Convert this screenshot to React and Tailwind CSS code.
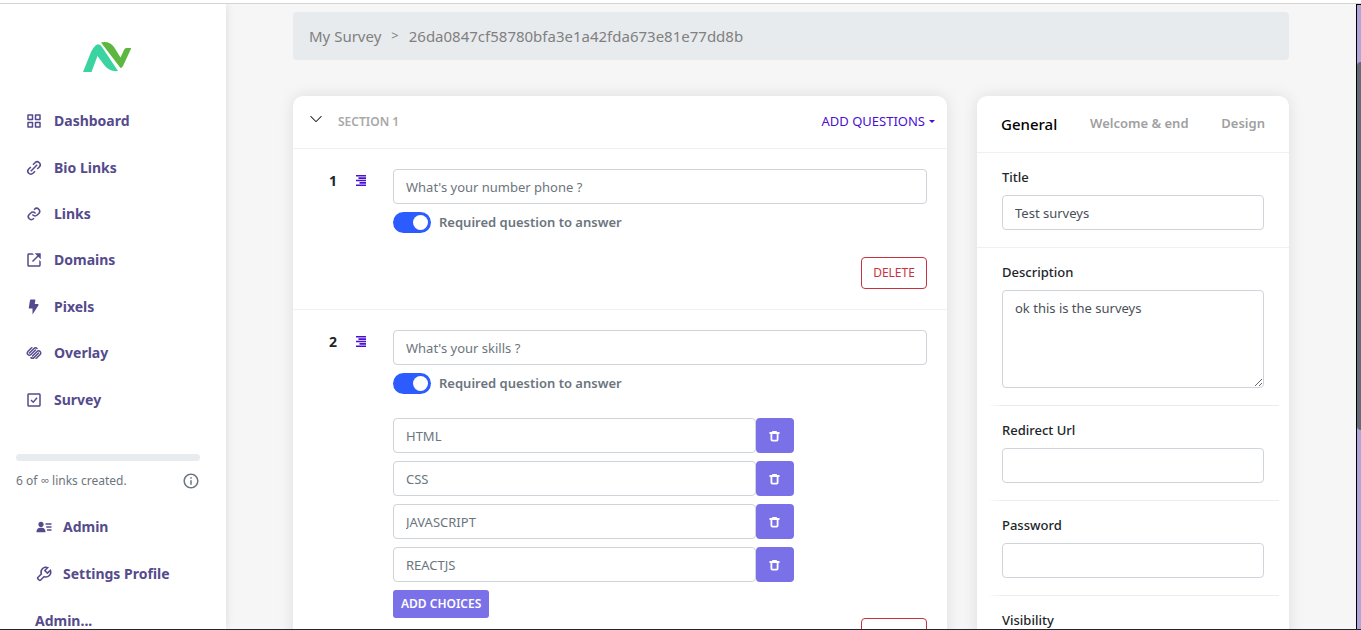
import {
  BiCheckSquare,
  BiGridAlt,
  BiInfoCircle,
  BiLink,
  BiLinkAlt,
  BiLinkExternal,
  BiLogoSquarespace,
  BiSolidBolt,
  BiSolidUserDetail,
  BiWrench,
} from "react-icons/bi";
import { BsChevronDown } from "react-icons/bs";

const mainLinks = [
  { label: "Dashboard", icon: BiGridAlt },
  { label: "Bio Links", icon: BiLinkAlt },
  { label: "Links", icon: BiLink },
  { label: "Domains", icon: BiLinkExternal },
  { label: "Pixels", icon: BiSolidBolt },
  { label: "Overlay", icon: BiLogoSquarespace },
  { label: "Survey", icon: BiCheckSquare },
];

const accountLinks = [
  { label: "Admin", icon: BiSolidUserDetail },
  { label: "Settings Profile", icon: BiWrench },
];

const choices = ["HTML", "CSS", "JAVASCRIPT", "REACTJS"];

const field =
  "block w-full rounded border border-[#ced4da] bg-white px-3 text-[13px] outline-none";

function Logo() {
  return (
    <svg viewBox="0 0 48 31" className="h-[31px] w-12" aria-hidden="true">
      <path
        d="M0 30 L8 10 Q11 4 14 2.5 Q17 1.5 19 5 L35 29 Q27 30 22 24 L14.5 14 L8.5 30 Z"
        fill="#3bd3a0"
      />
      <path
        d="M18 0.5 Q26 -1.5 31 5 L37.5 15.5 L41 8 Q41.6 6 43.5 6 H48.3 L40 24 Q39 26 37.5 26 Z"
        fill="#5cb63f"
      />
    </svg>
  );
}

function AlignIcon() {
  return (
    <svg viewBox="0 0 10 11" className="h-[11px] w-2.5 text-[#4a0fd0]" aria-hidden="true">
      <path
        d="M0 .7h10M2.5 3.1h7.5M0 5.5h10M3.5 7.9h6.5M0 10.3h10"
        stroke="currentColor"
        strokeWidth="1.6"
      />
    </svg>
  );
}

function TrashIcon() {
  return (
    <svg viewBox="0 0 11 12" className="h-3 w-[11px]" fill="none" stroke="currentColor" aria-hidden="true">
      <path d="M.5 3h10M3.2 1.8h4.6" strokeWidth="1.8" />
      <path d="M2.4 3v6.6q0 1 1 1h4.2q1 0 1-1V3" strokeWidth="1.8" />
    </svg>
  );
}

function Sidebar() {
  return (
    <aside className="flex w-[226px] shrink-0 flex-col bg-white shadow-[0_0_8px_rgba(0,0,0,0.12)]">
      <a href="#home" className="mt-[38px] ml-[83px] w-12" aria-label="Home">
        <Logo />
      </a>
      <nav className="mt-[25px] flex h-[325px] shrink-0 flex-col">
        {mainLinks.map(({ label, icon: Icon }) => (
          <a
            key={label}
            href={`#${label}`}
            className="flex flex-1 items-center gap-[11px] pl-[25px] text-sm font-bold text-[#554b8c]"
          >
            <Icon size={18} />
            {label}
          </a>
        ))}
      </nav>

      {/* Usage */}
      <div className="mt-[31px] px-4 pr-[26px]">
        <div className="h-[7px] rounded bg-[#e9ecef]" />
        <div className="mt-2 flex h-6 items-center justify-between text-xs text-[#6c757d]">
          <span>6 of ∞ links created.</span>
          <BiInfoCircle size={18} />
        </div>
      </div>

      <nav className="mt-2.5 flex flex-col text-sm font-bold text-[#554b8c]">
        {accountLinks.map(({ label, icon: Icon }) => (
          <a
            key={label}
            href={`#${label}`}
            className="flex h-[47px] items-center gap-2.5 pl-[35px]"
          >
            <Icon size={18} />
            {label}
          </a>
        ))}
        <a href="#account" className="flex h-[47px] items-center pl-[35px]">
          Admin...
        </a>
      </nav>
    </aside>
  );
}

function DeleteButton() {
  return (
    <button className="h-8 w-[66px] rounded border border-[#c73243] text-xs text-[#c73243]">
      DELETE
    </button>
  );
}

function Question({ number, title, children }) {
  return (
    <div className="flex pt-5 pr-5">
      <div className="flex h-[23px] w-[100px] shrink-0 items-center pl-9">
        <span className="w-[27px] text-sm font-bold text-[#212529]">
          {number}
        </span>
        <AlignIcon />
      </div>
      <div className="min-w-0 flex-1">
        <input
          aria-label={`Question ${number}`}
          defaultValue={title}
          className={`${field} h-[35px] text-[#6c757d]`}
        />
        <label className="mt-2 flex h-[21px] items-center gap-2 text-[13px] font-semibold text-[#6c757d]">
          <input
            type="checkbox"
            role="switch"
            defaultChecked
            className="flex h-[21px] w-[38px] appearance-none items-center justify-end rounded-full bg-[#2c5cff] px-[3px] before:size-[15px] before:rounded-full before:bg-white before:content-['']"
          />
          Required question to answer
        </label>
        {children}
      </div>
    </div>
  );
}

function SectionCard() {
  return (
    <section className="col-span-2 rounded-[10px] bg-white shadow-[0_0_16px_rgba(0,0,0,0.1)]">
      <header className="flex h-[53px] items-center border-b border-[#f0f0f0] pr-3 pl-4 text-xs">
        <BsChevronDown size={14} className="mr-[15px] mb-1.5 text-[#212529]" />
        <h2 className="font-semibold text-[#a8a8a8]">SECTION 1</h2>
        <button className="ml-auto flex items-center gap-1 text-[13px] text-[#4a0fd0]">
          ADD QUESTIONS
          <svg viewBox="0 0 6 3" className="h-[3px] w-1.5" aria-hidden="true">
            <path d="M0 0h6L3 3z" fill="currentColor" />
          </svg>
        </button>
      </header>

      <div className="border-b border-[#f0f0f0] pb-5">
        <Question number={1} title="What's your number phone ?">
          <div className="mt-6 flex justify-end">
            <DeleteButton />
          </div>
        </Question>
      </div>

      <Question number={2} title="What's your skills ?">
        <ul className="mt-6 flex flex-col gap-2">
          {choices.map((choice) => (
            <li key={choice} className="flex w-3/4">
              <input
                aria-label={`Choice ${choice}`}
                defaultValue={choice}
                className={`${field} h-[35px] min-w-0 flex-1 text-[#6c757d]`}
              />
              <button
                aria-label={`Remove ${choice}`}
                className="flex h-[35px] w-[38px] shrink-0 items-center justify-center rounded bg-[#7a70e8] text-white"
              >
                <TrashIcon />
              </button>
            </li>
          ))}
        </ul>
        <button className="mt-2 block h-7 rounded-[3px] bg-[#7a70e8] px-2 text-xs font-semibold text-white">
          ADD CHOICES
        </button>
        <div className="flex justify-end pb-5">
          <DeleteButton />
        </div>
      </Question>
    </section>
  );
}

function Setting({ label, id, children }) {
  return (
    <div className="px-[25px] pt-3.5 pb-[17px]">
      <label
        htmlFor={id}
        className="mb-[7px] block h-[21px] text-[13px] leading-[21px] font-medium text-[#212529]"
      >
        {label}
      </label>
      {children}
    </div>
  );
}

function FadedLine() {
  return (
    <div className="mx-2.5 h-px bg-linear-to-r from-transparent via-[#ececec] via-5% to-[#ececec]" />
  );
}

function SettingsCard() {
  return (
    <section className="rounded-[10px] bg-white shadow-[0_0_16px_rgba(0,0,0,0.1)]">
      <nav className="flex h-[57px] items-center justify-between border-b border-[#f0f0f0] px-6 text-[13px] font-semibold text-[#a0a0a0]">
        <button className="text-[15px] font-medium text-black">General</button>
        <button>Welcome &amp; end</button>
        <button>Design</button>
      </nav>
      <div className="border-b border-[#f0f0f0]">
        <Setting label="Title" id="title">
          <input
            id="title"
            defaultValue="Test surveys"
            className={`${field} h-[35px] text-[#495057]`}
          />
        </Setting>
      </div>
      <Setting label="Description" id="description">
        <textarea
          id="description"
          defaultValue="ok this is the surveys"
          className={`${field} h-[98px] resize-y py-[7px] leading-[21px] text-[#495057]`}
        />
      </Setting>
      <FadedLine />
      <Setting label="Redirect Url" id="redirect">
        <input id="redirect" className={`${field} h-[35px]`} />
      </Setting>
      <FadedLine />
      <Setting label="Password" id="password">
        <input id="password" type="password" className={`${field} h-[35px]`} />
      </Setting>
      <FadedLine />
      <Setting label="Visibility" id="visibility">
        <select id="visibility" className={`${field} h-[35px]`} />
      </Setting>
    </section>
  );
}

export default function App() {
  return (
    <div className="flex h-screen flex-col overflow-hidden bg-[#f6f6f6] font-['Noto_Sans','Open_Sans',sans-serif]">
      <div className="h-1 shrink-0 border-b border-[#d4d4d4] bg-white" />
      <div className="flex min-h-0 flex-1 overflow-hidden">
        <Sidebar />
        <main className="min-w-0 flex-1 px-[67px] pt-2">
          <nav className="flex h-12 items-center gap-2.5 rounded bg-[#e8ebee] px-4 text-[15px] text-[#808080]">
            <a href="#surveys">My Survey</a>
            <span className="text-[13px]">&gt;</span>
            <span>26da0847cf58780bfa3e1a42fda673e81e77dd8b</span>
          </nav>
          <div className="mt-9 grid grid-cols-3 items-start gap-[30px]">
            <SectionCard />
            <SettingsCard />
          </div>
        </main>

        {/* Scroll track */}
        <div className="w-[5px] shrink-0 border-t border-l border-black bg-[#b0a4d8] pt-[57px]">
          <div className="h-[368px] rounded-l bg-[#666a78]" />
        </div>
      </div>
      <div className="h-px shrink-0 bg-[#22262e]" />
    </div>
  );
}
